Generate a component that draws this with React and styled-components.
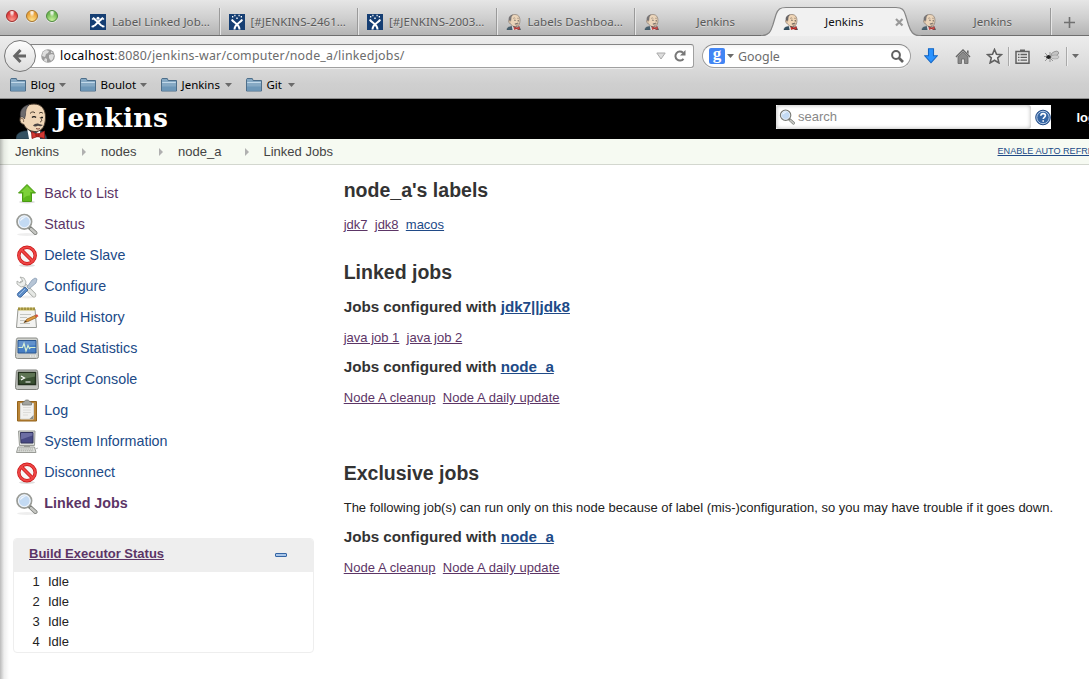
import React from "react";
import styled, { createGlobalStyle } from "styled-components";

const Global = createGlobalStyle`
  * { box-sizing: border-box; }
  body { margin: 0; background: #fff; overflow: hidden; font-family: "Liberation Sans", Arial, sans-serif; font-size: 13px; color: #333; }
  h1, h2, h3, p, ul { margin: 0; padding: 0; }
  svg { display: block; flex: none; }
`;

const BLUE = "#204a87";
const PURPLE = "#5c3566";

const Window = styled.div`width: 1089px; height: 679px; overflow: hidden; position: relative; background: #fff;`;

/* browser chrome */
const Chrome = styled.header`
  height: 99px;
  font-family: "Noto Sans", "Open Sans", sans-serif;
  background: linear-gradient(#ececec 36px, #dfdfdf 60px, #cfcfcf 84px, #cbcbcb 97px);
  border-bottom: 1px solid #8b8b8b;
`;
const TabStrip = styled.div`
  height: 36px;
  display: flex;
  position: relative;
  background: linear-gradient(#e6e6e6, #cfcfcf 18px, #b4b4b4);
  border-bottom: 1px solid #6e6e6e;
`;
const Lights = styled.div`width: 81px; flex: none; display: flex; gap: 8px; padding: 10px 0 0 6px;`;
const Light = styled.i`
  width: 12px; height: 12px; border-radius: 50%;
  border: 1px solid ${(p) => p.$edge};
  background: radial-gradient(ellipse at 50% 12%, #fffc 0 14%, transparent 38%), radial-gradient(circle at 50% 95%, ${(p) => p.$glow}, ${(p) => p.$fill} 70%);
  box-shadow: 0 1px 0 #fff8;
`;
const TabItem = styled.div`
  width: 138.5px; flex: none; height: 36px; display: flex; align-items: center;
  padding: 8px 8px 0 9px; position: relative; color: ${(p) => (p.$active ? "#111" : "#5a5a5a")};
  text-shadow: 0 1px 0 #fff6;
  &::after {
    content: ""; display: ${(p) => (p.$line ? "block" : "none")};
    position: absolute; right: -1px; top: 8px; height: 27px; width: 2px;
    background: linear-gradient(90deg, #9a9a9a 50%, #e6e6e6 50%);
  }
`;
const TabLabel = styled.span`
  flex: 1; margin-left: 6px; font-size: 11.5px; line-height: 16px; white-space: nowrap;
  letter-spacing: ${(p) => p.$ls || 0}px; text-align: ${(p) => (p.$center ? "center" : "left")};
`;
const ActiveShape = styled.svg`position: absolute; left: -13px; top: 6px;`;
const Above = styled.span`position: relative; display: flex; align-items: center;`;
const ActiveLabel = styled(TabLabel)`position: relative; text-align: center;`;
const CloseMark = styled(Above)`width: 20px; justify-content: flex-end;`;
const NewTab = styled.div`flex: 1; padding: 17px 0 0 13px;`;

const NavBar = styled.div`height: 38px; display: flex; align-items: center; padding: 2px 0 0 4px;`;
const BackButton = styled.div`
  width: 32px; height: 32px; border-radius: 50%; border: 1px solid #777; flex: none; z-index: 1;
  background: linear-gradient(#fdfdfd, #dcdcdc); display: flex; align-items: center; justify-content: center;
`;
const Field = styled.div`
  height: 24px; display: flex; align-items: center; background: linear-gradient(#f5f5f5, #fff 5px);
  border: 1px solid #a0a0a0; border-top-color: #848484; box-shadow: 0 1px 0 #eee;
`;
const UrlField = styled(Field)`width: 667px; margin-left: -9px; padding: 0 0 0 13px; border-radius: 0 3px 3px 0;`;
const UrlText = styled.span`
  flex: 1; margin-left: 5px; font-size: 12.4px; line-height: 18px; letter-spacing: ${(p) => p.$ls}px; color: #6c6c6c; white-space: nowrap;
  b { font-weight: 400; color: #000; }
`;
const SearchField = styled(Field)`width: 209px; margin-left: 8px; border-radius: 12px; padding: 0 6px;`;
const GoogleMark = styled.span`
  width: 16px; height: 16px; border-radius: 2px; background: #4285f4; color: #fff; display: flex; align-items: center; justify-content: center;
  font: 700 17px/12px "Liberation Serif", serif; padding-bottom: 4px;
`;
const SearchHint = styled.span`flex: 1; margin-left: 2px; font-size: 12.4px; letter-spacing: ${(p) => p.$ls}px; color: #6c6c6c;`;
const Tools = styled.div`display: flex; align-items: center; margin-left: 12px;`;
const Tool = styled.span`width: ${(p) => p.$w}px; display: flex; justify-content: center; flex: none;`;
const Separator = styled.i`width: 2px; height: 19px; margin-left: ${(p) => p.$pull || 0}px; background: linear-gradient(90deg, #a9a9a9 50%, #efefef 50%);`;

const Bookmarks = styled.nav`height: 22px; display: flex; padding-left: 10px; align-items: center;`;
const Bookmark = styled.div`width: ${(p) => p.$w}px; display: flex; align-items: center; color: #000;`;
const BookmarkName = styled.span`
  width: ${(p) => p.$w}px; margin-left: 4.5px; font-size: 11.5px; line-height: 16px; letter-spacing: ${(p) => p.$ls}px; white-space: nowrap;
`;

/* page */
const TopBar = styled.div`height: 40px; background: #000; display: flex; overflow: hidden; position: relative;`;
const Logo = styled.div`display: flex; flex: none; width: 776px; padding: 4px 0 0 16px;`;
const LogoText = styled.span`
  color: #fff; font: 700 26.5px/30px "DejaVu Serif", Georgia, serif; letter-spacing: ${(p) => p.$ls}px; margin-left: 6.5px;
`;
const SearchBox = styled.div`
  width: 275px; height: 24px; margin-top: 6px; flex: none; background: #fff; display: flex; align-items: center;
`;
const SearchInput = styled.div`
  width: 255px; height: 24px; display: flex; align-items: center; padding-left: 3px; color: #888; gap: 2px; border-radius: 3px;
  box-shadow: inset 0 0 4px #aaa; margin-right: 4px; span { line-height: 20px; }
`;
const Login = styled.b`color: #fff; margin: 11px 0 0 25.5px; line-height: 16px; white-space: nowrap; flex: none; width: 40px;`;
const Crumbs = styled.div`
  height: 26px; background: #f6faf2; border-bottom: 1px solid #d3d7cf; display: flex; color: #444; align-items: center; padding-left: 15px; overflow: hidden;
`;
const Crumb = styled.span`width: ${(p) => p.$w}px; flex: none; line-height: 24px; display: flex; align-items: center; justify-content: space-between; padding-right: ${(p) => p.$r || 0}px;`;
const Refresh = styled.a`
  color: ${BLUE}; font-size: 9.1px; line-height: 12px; margin-bottom: 2px; text-decoration: underline; white-space: nowrap; flex: none; width: 120px;
`;
const Body = styled.div`display: flex;`;
const EdgeShade = styled.div`position: absolute; left: 0; top: 139px; bottom: 0; width: 9px; background: linear-gradient(90deg, #0004, #0001 45%, transparent);`;
const Side = styled.aside`width: 344px; padding: 12px 30px 0 13px; flex: none;`;
const Task = styled.a`
  height: 31px; display: flex; align-items: center; padding-left: 2px; gap: 5.3px; font-size: 14.3px; white-space: nowrap;
  color: ${(p) => (p.$seen ? PURPLE : BLUE)}; font-weight: ${(p) => (p.$current ? 700 : 400)};
  svg { margin-top: 2px; }
`;
const Panel = styled.section`width: 301px; height: 115px; margin-top: 20px; border: 1px solid #eee; border-radius: 4px; overflow: hidden;`;
const PanelHead = styled.div`
  height: 33px; background: #eee; display: flex; justify-content: space-between; align-items: center; padding: 0 26px 5px 15px;
  a { color: ${PURPLE}; font-weight: 700; text-decoration: underline; }
`;
const Collapse = styled.i`width: 12px; height: 4px; border: 1px solid #3465a4; background: #a8c5e8; border-radius: 1px; margin-top: 4px;`;
const Executor = styled.div`height: 20px; line-height: 20px; display: flex; padding-left: 18.5px; gap: 8.2px; color: #222;`;

const Main = styled.main`flex: 1; padding-top: 13px; white-space: nowrap; margin-left: -0.3px;`;
const Title = styled.h1`font-size: 19.5px; line-height: 24px; margin-top: ${(p) => p.$mt || 0}px;`;
const SubTitle = styled.h3`font-size: 15.2px; line-height: 20px; margin-top: ${(p) => p.$mt}px; a { text-decoration: underline; color: ${BLUE}; }`;
const Links = styled.p`height: 20px; line-height: 20px; display: flex; gap: 7.2px; margin-top: ${(p) => p.$mt}px; letter-spacing: ${(p) => p.$ls || 0}px;`;
const Link = styled.a`color: ${(p) => (p.$fresh ? BLUE : PURPLE)}; text-decoration: underline;`;
const Note = styled.p`line-height: 20px; margin-top: 13px; color: #222; letter-spacing: -0.008px;`;

/* drawings */
const Butler = ({ w, h, dim }) => (
  <svg width={w} height={h} viewBox="0 0 32 36" opacity={dim ? 0.85 : 1}>
    <path d="M0 36c0-5 3-7 8-8l14-1c5 1 8 4 9 9z" fill="#335061" stroke="#1d2d38" strokeWidth=".6" />
    <path d="M11 25l7 8 6-7v10H13z" fill="#fff" />
    <path d="M6 13C6 5 11 1 18 1c8 0 11.500 6 11.500 13 0 9-3.500 14-9 14.500C14 29 9 25 8 21.500c-3-.5-4.500-3-4-5.500 0-2 1-3 2-3z" fill="#f0d6b7" stroke="#4a3c2f" strokeWidth="1" />
    <path d="M4.500 14C3.500 7 7 3 13 1.800 10 5 9.500 8 9.500 12l-1 4-1.500-2z" fill="#6d6b6d" stroke="#38363a" strokeWidth=".6" />
    <path d="M4.500 16c2.500-1.500 3.500 1 3 3" fill="none" stroke="#7a604b" />
    <path d="M14 10.500c1.500-2 4-2 5-.5M23 10.500c1-1.500 3-1.500 4 0M24 14c1.500 2.500 3 4 0 5" fill="none" stroke="#4a3c2f" />
    <path d="M16 14.500c1-1 3-1 4 0M25 14.500h2" stroke="#1c1c1c" strokeWidth="1.300" fill="none" />
    <path d="M17 22.500c1.500-1.500 4-2.500 6-1.500l4 1c-2 1.500-3 1.500-5 .8-2 1-4 1-5-.3z" fill="#4b4545" />
    <path d="M20 25.500c1.500.8 3 .5 4 0" stroke="#7a3b2e" fill="none" />
    <path d="M15.500 28.500l6 3 7-3.500v7.500l-7-2-5.500 2z" fill="#d33833" stroke="#8c1c18" strokeWidth=".8" />
    <circle cx="21.500" cy="32" r="1.800" fill="#b8241f" stroke="#7c1512" strokeWidth=".6" />
  </svg>
);
const JiraMark = ({ plain }) => (
  <svg width="16" height="16" viewBox="0 0 16 16">
    <path d="M0 0h16v16H0z" fill="#153e73" />
    {plain ? (
      <g fill="none" stroke="#fff">
        <path d="M2.500 12.500c3-.5 4-3 5.500-4.500 1.500 1.500 2.500 4 5.500 4.500M3.500 4.500C5 5 6 7 8 8c2-1 3-3 4.500-3.500" strokeWidth="2" />
        <path d="M1.500 12.500h2.500M12 12.500h2.500M2 5.500l2-2M14 5.500l-2-2" strokeWidth="1.300" />
        <circle cx="8" cy="4.300" r="1.500" fill="#fff" stroke="none" />
      </g>
    ) : (
      <g fill="none" stroke="#fff">
        <path d="M2.800 5.500c1.500 3.500 7.700 4 7.700 10M13.200 5.500c-1.500 3.500-7.700 4-7.700 10" strokeWidth="2" />
        <path d="M3 2.800h1.300M7.300 4.300h1.400M11.700 2.800H13M5.300 1.500h1.200M9.500 1.500h1.200" strokeWidth="1.400" />
      </g>
    )}
  </svg>
);
const Caret = ({ color = "#6a6a6a" }) => <svg width="7" height="4" viewBox="0 0 7 4"><path d="M0 0h7L3.500 4z" fill={color} /></svg>;
const Folder = () => (
  <svg width="16" height="14" viewBox="0 0 16 14">
    <path d="M.5 13V1.500l.6-1h5.200l.8 2h8.400V13z" fill="#86a9c4" stroke="#4d6e8a" />
    <path d="M1.200 4.500h13.600" stroke="#c2d9ea" /><path d="M1 8.500h14v4H1z" fill="#6d97b8" />
  </svg>
);
const Globe = () => (
  <svg width="14" height="14" viewBox="0 0 14 14"><circle cx="7" cy="7" r="6.800" fill="#9c9c9c" /><path d="M2 3l3-2 3 1-1 2-2 1-1 3-3-1zM8 6l3-1 2 1-1 4-2 2-2-3zM4 9l2 1 0 3-3-1zM10 2l2 2-2 0z" fill="#dedede" /></svg>
);
const Reload = () => (
  <svg width="12" height="12" viewBox="0 0 12 12"><path d="M9.500 8.800A4.500 4.500 0 1 1 9 2.800" fill="none" stroke="#777" strokeWidth="2" /><path d="M11.500 0v5.500H6z" fill="#777" /></svg>
);
const Lens = ({ size, x }) => (
  <svg width={size} height={size} viewBox="0 0 24 24">
    {x && <ellipse cx="12" cy="21.500" rx="10" ry="1.500" fill="#0001" />}
    <path d="M14.500 14.500l6 5.500" stroke="#777974" strokeWidth="4" strokeLinecap="round" /><path d="M16 16l4.500 4" stroke="#c6c7c3" strokeWidth="2.400" strokeLinecap="round" />
    <circle cx="9.300" cy="8.800" r="7.200" fill="#c3daf3" stroke={x ? "#9a9c97" : "#777974"} strokeWidth="1.900" /><circle cx="9.300" cy="8.800" r="5.900" fill="none" stroke="#f1f5fa" strokeWidth="1.100" />
    <path d="M5 8.500c0-3 3-5 6-4-3 1-4 2-6 4z" fill="#fff" opacity=".8" />
  </svg>
);
const No = () => (
  <svg width="24" height="24" viewBox="0 0 24 24">
    <ellipse cx="12" cy="21.500" rx="8" ry="1.500" fill="#0002" />
    <circle cx="12" cy="11.500" r="8.200" fill="#f7f7f7" stroke="#c81414" strokeWidth="3.400" /><path d="M6.300 5.800l11.400 11.400" stroke="#c81414" strokeWidth="3.600" />
    <circle cx="12" cy="11.500" r="8.200" fill="none" stroke="#ee4545" strokeWidth="2" /><path d="M6.300 5.800l11.400 11.400" stroke="#ee4545" strokeWidth="2.200" />
  </svg>
);
const icons = {
  up: <svg width="24" height="24" viewBox="0 0 24 24"><ellipse cx="12" cy="20" rx="8" ry="1.500" fill="#0002" /><path d="M12 2.500l8.500 8.500H16.500V19.500h-9V11h-4z" fill="#5db81c" stroke="#4a9a12" /><path d="M12 4l6 6h-3V13.500c-3 0-5 1-6.500 3V10H6z" fill="#8bdb45" opacity=".7" /></svg>,
  lens: <Lens size={24} x />,
  no: <No />,
  tools: <svg width="24" height="24" viewBox="0 0 24 24"><ellipse cx="12" cy="22" rx="9" ry="1.400" fill="#0001" /><path d="M7 8l12 12" stroke="#a1a39e" strokeWidth="4.600" strokeLinecap="round" /><path d="M7 8l12 12" stroke="#e6e8e5" strokeWidth="3.200" strokeLinecap="round" /><path d="M5 2l4 1 2 4-1 4-4 1-4-3V6l3 2 3-2z" fill="#eceeec" stroke="#a5a7a3" strokeWidth=".8" /><path d="M20 3l2 1-1 4-7 6-2-2 5-7z" fill="#b6c5d6" stroke="#7f95ae" strokeWidth=".7" /><path d="M10 12l3 3-7 7c-2 1-5-2-3-4z" fill="#5c8cc6" stroke="#2f5b97" strokeWidth=".8" /><path d="M10 14l-6 6" stroke="#9dc0e8" /></svg>,
  notes: <svg width="24" height="24" viewBox="0 0 24 24"><path d="M3 3h17l1.500 18.500H1.500z" fill="#f3f3f1" stroke="#979994" /><path d="M3 1.500h17v3H3z" fill="#c5b65e" /><path d="M4 1.500v2.500M7 1.500v2.500M10 1.500v2.500M13 1.500v2.500M16 1.500v2.500M19 1.500v2.500" stroke="#7c6f24" /><path d="M5 8.500h11M5 11.500h7M5 14.500h5M5 17.500h10" stroke="#c4c6c2" /><path d="M9 16.500l3-3.500 8-3.500 1.500 2-8.500 4z" fill="#e09a3f" stroke="#8d5a1a" strokeWidth=".7" /><path d="M20 9.300l2-1 1.500 2-2 1z" fill="#d84a3a" /><path d="M9 16.500l2-2 .8 1z" fill="#222" /></svg>,
  chart: <svg width="24" height="24" viewBox="0 0 24 24"><path d="M3 1h18q1.500 0 1.600 1.500l.9 17q0 2-2 2h-19q-2 0-2-2l.9-17Q1.500 1 3 1z" fill="#d0d2ce" stroke="#8b8d88" /><path d="M3 3.500h18v12.500H3z" fill="#477fc4" stroke="#2a568f" /><path d="M3.500 10.500h4l1.500-4 2 7.500 2-5.500 1.500 3 1-1h5" fill="none" stroke="#d5f0d0" strokeWidth="1.200" /><path d="M3.500 4h17v4c-6 0-12 1-17 3z" fill="#fff" opacity=".15" /><path d="M15 19h1M17.500 19h1M20 19h1" stroke="#fff" /></svg>,
  console: <svg width="24" height="24" viewBox="0 0 24 24"><path d="M3 2h18q1.500 0 1.600 1.500l.9 16q0 2-2 2h-19q-2 0-2-2l.9-16Q1.500 2 3 2z" fill="#c3c5c0" stroke="#7d7f7a" /><path d="M3.500 4.500h17v12h-17z" fill="#3a5132" stroke="#23301e" strokeWidth="1.500" /><path d="M4 5h16v3.500L4 12z" fill="#6d8462" opacity=".7" /><path d="M6 8l3.500 2L6 12M10.500 14h5" fill="none" stroke="#fff" strokeWidth="1.200" /></svg>,
  clip: <svg width="24" height="24" viewBox="0 0 24 24"><path d="M2.500 2.500h19v19.500h-19z" fill="#b98437" stroke="#94631a" /><path d="M5.500 4.500h13v15.500h-13z" fill="#f1f1ef" stroke="#d8d8d4" /><path d="M8 8.500h8M8 11h8M8 13.500h8M8 16h5" stroke="#dcdcd9" /><path d="M14.500 20l4-4v4z" fill="#8a8c87" /><path d="M7.500 3.500l2-1c0-2 5-2 5 0l2 1v2.500h-9z" fill="#a2a49f" stroke="#777974" strokeWidth=".8" /></svg>,
  computer: <svg width="24" height="24" viewBox="0 0 24 24"><path d="M3.500 1h16.500l-.5 14.500h-15z" fill="#d9dbd7" stroke="#9a9c97" /><path d="M5.500 2.500h12.500v10.500H6z" fill="#484a84" stroke="#33355f" /><path d="M6 3h11.500v2.500L6 9.500z" fill="#7c7eb0" opacity=".7" /><path d="M9 15.500h6v2H9z" fill="#989a95" /><path d="M3 17h16.500l1.500 5.500H1.500z" fill="#dfe1dd" stroke="#999b96" /><path d="M4 19h14M3.500 20.800h15" stroke="#a5a7a2" strokeDasharray="1.500 .6" /><path d="M20.500 19l2.500-1" stroke="#bbb" /></svg>,
};
const tasks = [
  ["up", "Back to List", 1], ["lens", "Status", 1], ["no", "Delete Slave"], ["tools", "Configure"], ["notes", "Build History"],
  ["chart", "Load Statistics"], ["console", "Script Console"], ["clip", "Log"], ["computer", "System Information"], ["no", "Disconnect"], ["lens", "Linked Jobs", 1, 1],
];
const CrumbArrow = () => <svg width="4" height="8" viewBox="0 0 4 8"><path d="M0 0l4 4-4 4z" fill="#b0b0b0" /></svg>;

const DownloadArrow = () => <svg width="14" height="16" viewBox="0 0 14 16"><path d="M4.500.8h5v7h3.800L7 14.800.7 7.800h3.800z" fill="#2a93ff" stroke="#1667c4" strokeWidth="1.100" /></svg>;
const Home = () => <svg width="16" height="15" viewBox="0 0 16 15"><path d="M1 8l7-7 7 7" fill="none" stroke="#666" strokeWidth="1.500" /><path d="M3 8l5-5 5 5v6.500H9.500V10h-3v4.500H3z" fill="#8a8a8a" stroke="#666" strokeWidth=".8" /><path d="M12 1.500h1.600V5L12 3.500z" fill="#666" /></svg>;
const Star = () => <svg width="17" height="16" viewBox="0 0 17 16"><path d="M8.500 1.500l2 4.700 5 .4-3.800 3.300 1.200 5-4.400-2.700L4.100 14.900l1.200-5L1.500 6.600l5-.4z" fill="#ededed" stroke="#606060" strokeWidth="1.600" /></svg>;
const ListIcon = () => <svg width="15" height="15" viewBox="0 0 15 15"><path d="M1 2.500h13v11.700H1z" fill="#e3e3e3" stroke="#606060" strokeWidth="1.500" /><path d="M5 .5h5V3H5z" fill="#606060" /><path d="M3 5.500h1.500M3 8.300h1.500M3 11.200h1.500M5.500 5.500H12M5.500 8.300H12M5.500 11.200H12" stroke="#606060" strokeWidth="1.300" /></svg>;
const Bug = () => <svg width="16" height="13" viewBox="0 0 16 13"><ellipse cx="11" cy="3.800" rx="4" ry="2.200" transform="rotate(-25 11 4)" fill="#c4c4c4" stroke="#888" strokeWidth=".7" /><ellipse cx="11" cy="7" rx="4" ry="2" fill="#ccc" stroke="#999" strokeWidth=".6" /><ellipse cx="4.500" cy="7" rx="2.500" ry="2" fill="#222" /><path d="M1 3l3 3M0 6.500h3M1 11l3-3M6 12l0-4M9 11L6 8M6 2l0 4" stroke="#777" strokeWidth=".7" /></svg>;

export default function App() {
  return (
    <Window>
      <Global />
      <Chrome>
        <TabStrip>
          <Lights>
            <Light $edge="#a12a2a" $fill="#dc3c3c" $glow="#ff9d90" />
            <Light $edge="#a8742a" $fill="#e9a035" $glow="#ffe48d" />
            <Light $edge="#4d8a3c" $fill="#6db650" $glow="#cdf5a0" />
          </Lights>
          <TabItem $line><JiraMark plain /><TabLabel $ls={0.05}>Label Linked Job…</TabLabel></TabItem>
          <TabItem $line><JiraMark /><TabLabel $ls={0.05}>[#JENKINS-2461…</TabLabel></TabItem>
          <TabItem $line><JiraMark /><TabLabel $ls={0.05}>[#JENKINS-2003…</TabLabel></TabItem>
          <TabItem $line><Butler w={16} h={16} dim /><TabLabel $ls={0.05}>Labels Dashboa…</TabLabel></TabItem>
          <TabItem><Butler w={16} h={16} dim /><TabLabel $center>Jenkins</TabLabel></TabItem>
          <TabItem $active>
            <ActiveShape width="166" height="30" viewBox="0 0 166 30">
              <path d="M0 30c9 0 10-5 12-11l3-10C17 3 19 1.500 25 1.500h110c6 0 8 2 9.500 7.500l3 10c2 6 4 11 13 11z" fill="#f1f1f1" />
              <path d="M0 29.500c9 0 10-5 12-11l3-10C17 3 19 1.500 25 1.500h110c6 0 8 2 9.500 7.500l3 10c2 6 4 11 13 11" fill="none" stroke="#858585" strokeWidth="1.200" />
            </ActiveShape>
            <Above><Butler w={16} h={16} /></Above>
            <ActiveLabel $center>Jenkins</ActiveLabel>
            <CloseMark><svg width="9" height="9" viewBox="0 0 9 9"><path d="M1 1l6.500 6.500M7.500 1L1 7.500" stroke="#999" strokeWidth="2.200" /></svg></CloseMark>
          </TabItem>
          <TabItem $line><Butler w={16} h={16} dim /><TabLabel $center>Jenkins</TabLabel></TabItem>
          <NewTab><svg width="11" height="11" viewBox="0 0 11 11"><path d="M5.500 0v11M0 5.500h11" stroke="#707070" strokeWidth="1.600" /></svg></NewTab>
        </TabStrip>
        <NavBar>
          <BackButton><svg width="16" height="16" viewBox="0 0 16 16"><path d="M8.500 2L2.800 8l5.700 6M3.500 8H14" fill="none" stroke="#666" strokeWidth="3" /></svg></BackButton>
          <UrlField>
            <Globe />
            <UrlText $ls={0.22}><b>localhost</b>:8080/jenkins-war/computer/node_a/linkedjobs/</UrlText>
            <svg width="10" height="8" viewBox="0 0 10 8"><path d="M.8 1h8.400L5 7z" fill="#ddd" stroke="#aaa" /></svg>
            <Tool $w={27}><Reload /></Tool>
          </UrlField>
          <SearchField>
            <GoogleMark>g</GoogleMark>
            <Tool $w={11}><Caret /></Tool>
            <SearchHint $ls={0}>Google</SearchHint>
            <svg width="13" height="13" viewBox="0 0 13 13"><circle cx="5" cy="5" r="3.900" fill="none" stroke="#606060" strokeWidth="2" /><path d="M8 8l4 4" stroke="#606060" strokeWidth="2.600" /></svg>
          </SearchField>
          <Tools>
            <Tool $w={16}><DownloadArrow /></Tool>
            <Tool $w={48}><Home /></Tool>
            <Tool $w={14}><Star /></Tool>
            <Tool $w={15}><Separator /></Tool>
            <Tool $w={13}><ListIcon /></Tool>
            <Tool $w={46}><Bug /></Tool>
            <Separator $pull={-9} />
            <Tool $w={14}><Caret /></Tool>
          </Tools>
        </NavBar>
        <Bookmarks>
          {[["Blog", 70, 28], ["Boulot", 81, 39], ["Jenkins", 85, 43], ["Git", 60, 21]].map(([n, w, t]) => (
            <Bookmark key={n} $w={w}><Folder /><BookmarkName $w={t} $ls={0}>{n}</BookmarkName><Caret /></Bookmark>
          ))}
        </Bookmarks>
      </Chrome>

      <TopBar>
        <Logo><Butler w={32} h={36} /><LogoText $ls={0.35}>Jenkins</LogoText></Logo>
        <SearchBox>
          <SearchInput><Lens size={17} /><span>search</span></SearchInput>
          <svg width="16" height="17" viewBox="0 0 16 17"><circle cx="8" cy="8.500" r="7.300" fill="#3465a4" stroke="#204a87" /><circle cx="8" cy="8.500" r="6.200" fill="none" stroke="#b6cbe6" /><path d="M5.800 6.800c.2-3 4.600-2.700 4.600-.2 0 1.700-2.200 1.700-2.200 3.500M8.200 11.300v1.500" fill="none" stroke="#fff" strokeWidth="1.600" /></svg>
        </SearchBox>
        <Login>log in</Login>
      </TopBar>
      <Crumbs>
        <Crumb $w={86} $r={15}>Jenkins<CrumbArrow /></Crumb>
        <Crumb $w={77} $r={15}>nodes<CrumbArrow /></Crumb>
        <Crumb $w={85.5} $r={15}>node_a<CrumbArrow /></Crumb>
        <Crumb $w={734}>Linked Jobs</Crumb>
        <Refresh>ENABLE AUTO REFRESH</Refresh>
      </Crumbs>

      <Body>
        <Side>
          {tasks.map(([icon, label, seen, current]) => (
            <Task key={label} $seen={seen} $current={current}>{icons[icon]}{label}</Task>
          ))}
          <Panel>
            <PanelHead><a>Build Executor Status</a><Collapse /></PanelHead>
            {[1, 2, 3, 4].map((n) => <Executor key={n}><span>{n}</span><span>Idle</span></Executor>)}
          </Panel>
        </Side>
        <Main>
          <Title>node_a's labels</Title>
          <Links $mt={13}><Link>jdk7</Link><Link>jdk8</Link><Link $fresh>macos</Link></Links>
          <Title $mt={25}>Linked jobs</Title>
          <SubTitle $mt={13}>Jobs configured with <a>jdk7||jdk8</a></SubTitle>
          <Links $mt={11}><Link>java job 1</Link><Link>java job 2</Link></Links>
          <SubTitle $mt={9}>Jobs configured with <a>node_a</a></SubTitle>
          <Links $mt={11} $ls={0.06}><Link>Node A cleanup</Link><Link>Node A daily update</Link></Links>
          <Title $mt={53}>Exclusive jobs</Title>
          <Note>The following job(s) can run only on this node because of label (mis-)configuration, so you may have trouble if it goes down.</Note>
          <SubTitle $mt={9}>Jobs configured with <a>node_a</a></SubTitle>
          <Links $mt={11} $ls={0.06}><Link>Node A cleanup</Link><Link>Node A daily update</Link></Links>
        </Main>
      </Body>
      <EdgeShade />
    </Window>
  );
}
